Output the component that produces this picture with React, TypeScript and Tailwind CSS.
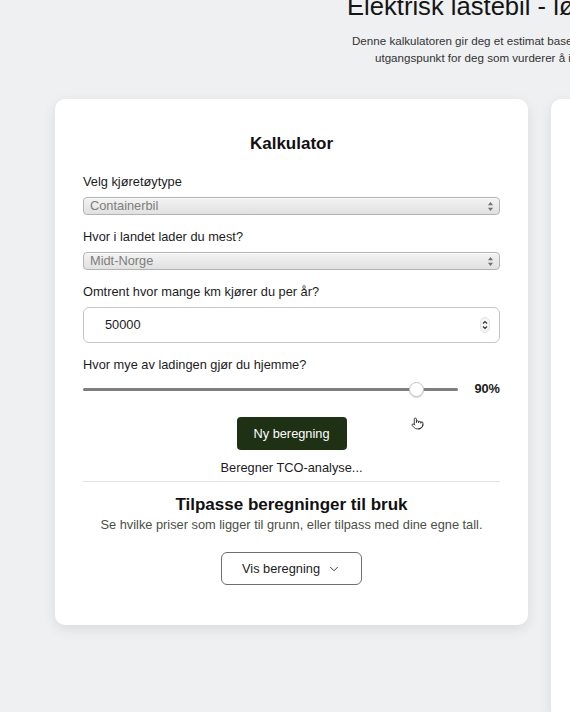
import React from "react";
import { ChevronDown, Pointer } from "lucide-react";

function FakeSelect({ value }: { value: string }) {
  return (
    <div className="mt-[7px] h-[18px] flex items-center justify-between rounded-[4px] border border-[#b3b3b3] bg-gradient-to-b from-[#f3f3f3] to-[#e1e1e1] pl-[6px] pr-[5px] shadow-[inset_0_1px_0_rgba(255,255,255,0.7)]">
      <span className="text-[12.8px] leading-none text-[#7d7d7d]">{value}</span>
      <svg width="7" height="11" viewBox="0 0 7 11" className="text-[#6f6f6f]">
        <path d="M3.5 1 L6 4.3 H1 Z" fill="currentColor" />
        <path d="M3.5 10 L6 6.7 H1 Z" fill="currentColor" />
      </svg>
    </div>
  );
}

function Label({ children, mt }: { children: React.ReactNode; mt: string }) {
  return <div className={`${mt} text-[12.8px] leading-[16px] text-[#1c1c1c]`}>{children}</div>;
}

function Calculator() {
  return (
    <div className="w-[473px] h-[526px] shrink-0 rounded-[10px] bg-white shadow-[0_4px_14px_rgba(0,0,0,0.09)] px-[28px] pt-[35px]">
      <h2 className="text-center text-[17px] leading-[20px] font-bold text-[#111]">Kalkulator</h2>

      <Label mt="mt-[20px]">Velg kjøretøytype</Label>
      <FakeSelect value="Containerbil" />

      <Label mt="mt-[14px]">Hvor i landet lader du mest?</Label>
      <FakeSelect value="Midt-Norge" />

      <Label mt="mt-[14px]">Omtrent hvor mange km kjører du per år?</Label>
      <div className="mt-[7px] h-[36px] flex items-center justify-between rounded-[6px] border border-[#c7c7c7] bg-white pl-[21px] pr-[9px]">
        <span className="text-[12.8px] text-[#1c1c1c]">50000</span>
        <svg width="10" height="16" viewBox="0 0 10 16">
          <rect x="0.5" y="0.5" width="9" height="15" rx="4.5" fill="#f4f4f4" stroke="#e2e2e2" />
          <path d="M3 6.5 L5 4.5 L7 6.5" fill="none" stroke="#333" strokeWidth="1.2" />
          <path d="M3 9.5 L5 11.5 L7 9.5" fill="none" stroke="#333" strokeWidth="1.2" />
        </svg>
      </div>

      <Label mt="mt-[14px]">Hvor mye av ladingen gjør du hjemme?</Label>
      <div className="mt-[8px] h-[16px] flex items-center">
        <div className="relative w-[375px] h-[3px] rounded-full bg-[#7e7e7e]">
          <div className="absolute left-[326px] top-[-6px] w-[15px] h-[15px] rounded-full bg-white border border-[#c4c4c4] shadow-[0_1px_1px_rgba(0,0,0,0.15)]" />
        </div>
        <span className="ml-auto text-[12.8px] font-bold text-[#1c1c1c]">90%</span>
      </div>

      <div className="mt-[20px] flex justify-center">
        <button className="h-[33px] w-[110px] rounded-[4px] bg-[#1e3114] text-[12.8px] text-white">
          Ny beregning
        </button>
      </div>

      <div className="mt-[10px] text-center text-[12.8px] leading-[16px] text-[#1c1c1c]">
        Beregner TCO-analyse...
      </div>

      <div className="mt-[5px] h-px bg-[#dfe1e4]" />

      <h3 className="mt-[13px] text-center text-[17px] leading-[20px] font-bold text-[#111]">
        Tilpasse beregninger til bruk
      </h3>
      <p className="mt-[2px] text-center text-[12.8px] leading-[16px] text-[#4a4f45]">
        Se hvilke priser som ligger til grunn, eller tilpass med dine egne tall.
      </p>

      <div className="mt-[19px] flex justify-center">
        <button className="h-[33px] w-[141px] flex items-center justify-center gap-[7px] rounded-[6px] border border-[#6e6e6e] bg-white text-[12.8px] text-[#1c1c1c]">
          Vis beregning
          <ChevronDown size={14} strokeWidth={1.5} />
        </button>
      </div>
    </div>
  );
}

export default function App() {
  return (
    <div
      className="relative h-[712px] w-full overflow-hidden bg-[#eef0f1]"
      style={{ fontFamily: '"Liberation Sans", Arial, sans-serif' }}
    >
      <div className="whitespace-nowrap">
        <h1 className="mt-[-9px] pl-[347px] text-[25.6px] leading-[30px] font-normal text-[#151515]">
          Elektrisk lastebil - lønnsomhetskalkulator
        </h1>
        <div className="mt-[11px] text-[11.6px] leading-[17px] text-[#333]">
          <div className="pl-[352px]">Denne kalkulatoren gir deg et estimat basert på dine egne tall og forutsetninger.</div>
          <div className="pl-[375px]">utgangspunkt for deg som vurderer å investere i en elektrisk lastebil.</div>
        </div>
      </div>

      <div className="mt-[33px] flex gap-[23px] pl-[55px]">
        <Calculator />
        <div className="w-[473px] h-[620px] shrink-0 rounded-[10px] bg-white shadow-[0_4px_14px_rgba(0,0,0,0.09)]" />
      </div>

      <Pointer
        size={13}
        strokeWidth={1.6}
        className="absolute left-[411px] top-[417px] text-[#222]"
      />
    </div>
  );
}
